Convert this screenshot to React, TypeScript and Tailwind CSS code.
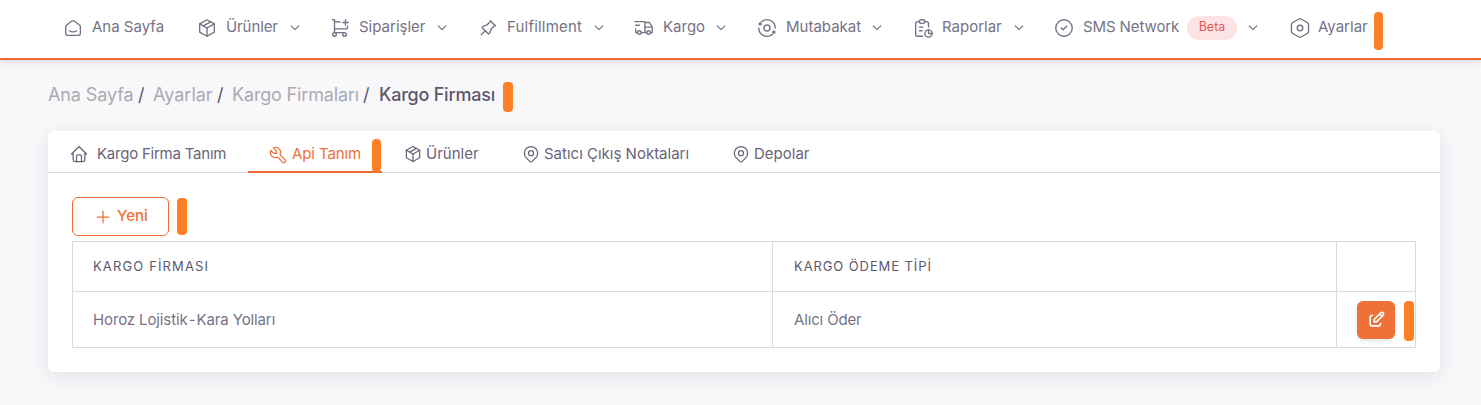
import React from "react";
import {
  TbSmartHome,
  TbPackage,
  TbPin,
  TbTruckDelivery,
  TbReport,
  TbCircleCheck,
  TbHome,
  TbTool,
  TbMapPin,
  TbEdit,
  TbPlus,
} from "react-icons/tb";

type DrawingProps = { className?: string };

const strokeProps = {
  viewBox: "0 0 24 24",
  fill: "none",
  stroke: "currentColor",
  strokeLinecap: "round" as const,
  strokeLinejoin: "round" as const,
};

function CartIcon({ className }: DrawingProps) {
  return (
    <svg {...strokeProps} strokeWidth={1.5} className={className}>
      <circle cx="6" cy="19" r="2" />
      <circle cx="17" cy="19" r="2" />
      <path d="M17 17H6V3H4" />
      <path d="M6 5l6 .430M20.200 10l-.500 3H6" />
      <path d="M15 6h6M18 3v6" />
    </svg>
  );
}

function OrbitIcon({ className }: DrawingProps) {
  return (
    <svg {...strokeProps} strokeWidth={1.5} className={className}>
      <circle cx="12" cy="12" r="3.300" />
      <path d="M6 5.300a9 9 0 0 1 15 6.700M3 12a9 9 0 0 0 15 6.700" />
      <circle cx="4.500" cy="7.500" r="1.100" fill="currentColor" />
      <circle cx="19.500" cy="16.500" r="1.100" fill="currentColor" />
    </svg>
  );
}

function HexNutIcon({ className }: DrawingProps) {
  return (
    <svg {...strokeProps} strokeWidth={1.5} className={className}>
      <path d="M11 2.200a2 2 0 0 1 2 0l7.300 4.100a2 2 0 0 1 1 1.700v8a2 2 0 0 1-1 1.700L13 21.800a2 2 0 0 1-2 0l-7.300-4.100a2 2 0 0 1-1-1.700V8a2 2 0 0 1 1-1.700z" />
      <circle cx="12" cy="12" r="3" />
    </svg>
  );
}

function Chevron() {
  return (
    <svg {...strokeProps} viewBox="0 0 10 6" strokeWidth={1.2} className="h-[6px] w-[10px] shrink-0">
      <path d="M1.200 .900L5 4.700L8.800 .900" />
    </svg>
  );
}

function Marker({ className }: DrawingProps) {
  return <span className={`block shrink-0 rounded-[4px] bg-[#ff7f27] ${className ?? ""}`} />;
}

const icon22 = "h-[22px] w-[22px] shrink-0 stroke-[1.5]";
const icon20 = "h-5 w-5 shrink-0 stroke-[1.5]";

const navItems = [
  { label: "Ana Sayfa", icon: <TbSmartHome className={icon22} />, box: "w-[134px]", text: "w-[72px]", chevron: false },
  { label: "Ürünler", icon: <TbPackage className={icon22} />, box: "w-[133px]", text: "w-[53px] tracking-[-0.1px]", chevron: true },
  { label: "Siparişler", icon: <CartIcon className={icon22} />, box: "w-[148px]", text: "w-[67px]", chevron: true },
  { label: "Fulfillment", icon: <TbPin className={icon22} />, box: "w-[156px]", text: "w-[76px] tracking-[0.2px]", chevron: true },
  { label: "Kargo", icon: <TbTruckDelivery className={icon22} />, box: "w-[123px]", text: "w-[42px]", chevron: true },
  { label: "Mutabakat", icon: <OrbitIcon className={icon22} />, box: "w-[156px]", text: "w-[75px]", chevron: true },
  { label: "Raporlar", icon: <TbReport className={icon22} />, box: "w-[141px]", text: "w-[61px]", chevron: true },
];

export default function App() {
  return (
    <div className="flex h-[405px] w-[1481px] flex-col overflow-hidden bg-[#f8f7fa] font-['Inter','Noto_Sans',sans-serif] text-[15px] text-[#767285]">
      <header className="relative flex h-[60px] shrink-0 items-start border-b-2 border-[#ea6a30] bg-white pl-[62px] shadow-[0_2px_6px_rgba(47,43,61,0.14)]">
        <nav className="flex h-[55px] items-center">
          {navItems.map((item) => (
            <a key={item.label} className={`flex shrink-0 items-center ${item.box}`}>
              {item.icon}
              <span className={`ml-2 whitespace-nowrap ${item.text}`}>{item.label}</span>
              {item.chevron && <span className="ml-[10.5px] pt-px"><Chevron /></span>}
            </a>
          ))}
          <a className="flex w-[236px] shrink-0 items-center">
            <TbCircleCheck className={icon22} />
            <span className="ml-2 w-[96px] whitespace-nowrap tracking-[-0.1px]">SMS Network</span>
            <span className="ml-2 flex h-6 w-[50px] items-center justify-center rounded-full bg-[#fce4e4] text-[12.5px] text-[#ea5455]">Beta</span>
            <span className="ml-[11px] pt-px"><Chevron /></span>
          </a>
          <a className="flex shrink-0 items-center">
            <HexNutIcon className={icon22} />
            <span className="ml-[7px] w-[51px] whitespace-nowrap">Ayarlar</span>
          </a>
          <Marker className="mt-[7px] ml-[5px] h-[38px] w-[9px]" />
        </nav>
      </header>

      <main className="px-[48px] pt-[21px] pr-[41px]">
        <div className="flex h-[31px] items-center text-[18px] leading-[27px] text-[#5d596c] [&>a]:-mt-[4px] [&>a]:whitespace-nowrap [&>i]:-mt-[4px] [&>i]:not-italic">
          <a className="w-[90px] tracking-[-0.1px] text-[#acaab1]">Ana Sayfa</a>
          <i className="w-[15px]">/</i>
          <a className="w-[64px] text-[#acaab1]">Ayarlar</a>
          <i className="w-[15px]">/</i>
          <a className="w-[131px] tracking-[-0.16px] text-[#acaab1]">Kargo Firmaları</a>
          <i className="w-[16px]">/</i>
          <a className="w-[124px] font-medium tracking-[-0.22px]">Kargo Firması</a>
          <Marker className="h-[30px] w-[10px]" />
        </div>

        <section className="mt-[19px] h-[241px] rounded-md bg-white shadow-[0_4px_18px_rgba(47,43,61,0.1)]">
          <div className="flex h-[42px] border-b border-[#dbdade] pl-[21px] text-[#686477]">
            <a className="flex w-[179px] items-center pt-[5px]">
              <TbHome className={icon20} />
              <span className="ml-2 whitespace-nowrap tracking-[-0.23px]">Kargo Firma Tanım</span>
            </a>
            <a className="flex h-[42px] w-[134px] items-center border-b-2 border-[#ea6a30] pt-[7px] pl-[20px] text-[#ec7037]">
              <TbTool className={icon20} />
              <span className="ml-1 w-[68px] whitespace-nowrap tracking-[-0.1px]">Api Tanım</span>
              <Marker className="mt-[2px] ml-[12px] h-[33px] w-[9px]" />
            </a>
            <a className="flex w-[139px] items-center pt-[5px] pl-[21px]">
              <TbPackage className={icon20} />
              <span className="ml-[3px] whitespace-nowrap">Ürünler</span>
            </a>
            <a className="flex w-[210px] items-center pt-[5px]">
              <TbMapPin className={icon20} />
              <span className="ml-[3px] whitespace-nowrap">Satıcı Çıkış Noktaları</span>
            </a>
            <a className="flex items-center pt-[5px]">
              <TbMapPin className={icon20} />
              <span className="ml-[3px] whitespace-nowrap">Depolar</span>
            </a>
          </div>

          <div className="px-6 pt-6">
            <div className="flex items-center">
              <button className="flex h-[39px] w-[97px] items-center rounded-md border border-[#ec7037] pl-5 font-medium text-[#ec7037]">
                <TbPlus className="h-5 w-5 stroke-[1.5]" />
                <span className="ml-[4px]">Yeni</span>
              </button>
              <Marker className="ml-2 h-[37px] w-[10px]" />
            </div>
            <div className="mt-[5px] grid w-[1344px] grid-cols-[700px_564px_79px] grid-rows-[50px_56px] border-t border-l border-[#dbdade] [&>div]:border-r [&>div]:border-b [&>div]:border-[#dbdade]">
              <div className="flex items-center pl-5 text-[13px] tracking-[1.13px] text-[#5d596c]">KARGO FİRMASI</div>
              <div className="flex items-center pl-[21px] text-[13px] tracking-[0.9px] text-[#5d596c]">KARGO ÖDEME TİPİ</div>
              <div />
              <div className="flex items-center pt-[2px] pl-5 tracking-[-0.12px]">
                <p>
                  Horoz Lojistik<span className="[word-spacing:-3px]"> - </span>Kara Yolları
                </p>
              </div>
              <div className="flex items-center pt-[2px] pl-[21px] tracking-[-0.15px]">Alıcı Öder</div>
              <div className="flex items-center pl-5">
                <button className="flex h-[38px] w-[38px] shrink-0 items-center justify-center rounded-md bg-[#ee7137] text-white shadow-[0_2px_4px_rgba(165,163,174,0.3)]">
                  <TbEdit className="h-[19px] w-[19px]" />
                </button>
                <Marker className="mt-[3px] ml-[9px] h-10 w-[10px]" />
              </div>
            </div>
          </div>
        </section>
      </main>
    </div>
  );
}
